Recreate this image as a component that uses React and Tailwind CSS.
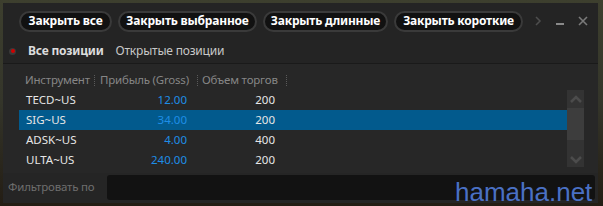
import React from "react";

const rows = [
  { sym: "TECD~US", profit: "12.00", vol: "200" },
  { sym: "SIG~US", profit: "34.00", vol: "200", selected: true },
  { sym: "ADSK~US", profit: "4.00", vol: "400" },
  { sym: "ULTA~US", profit: "240.00", vol: "200" },
];

const buttons = [
  { label: "Закрыть все", w: "w-[93px]" },
  { label: "Закрыть выбранное", w: "w-[139px]" },
  { label: "Закрыть длинные", w: "w-[125px]" },
  { label: "Закрыть короткие", w: "w-[129px]" },
];

function Sep() {
  return <span className="mx-[3px] h-[11px] w-0 shrink-0 border-l border-dotted border-[#5a5a5a]" />;
}

function Chevron({ down }) {
  return (
    <svg width="12" height="8" viewBox="0 0 12 8" className={down ? "rotate-180" : ""}>
      <path d="M1 7 L6 2 L11 7" fill="none" stroke="#4c4c4c" strokeWidth="2.5" />
    </svg>
  );
}

export default function App() {
  return (
    <div
      className="relative w-[603px] h-[206px] p-[3px] whitespace-nowrap bg-gradient-to-b from-[#3d3f2e] via-[#34352a] to-[#231d14]"
      style={{ fontFamily: '"Noto Sans", "Segoe UI", sans-serif' }}
    >
      <div className="flex h-[200px] w-[595px] flex-col bg-[#242424]">
        {/* toolbar */}
        <div className="flex h-[36px] items-center pl-[16px] pr-[10px]">
          <div className="flex gap-[6px]">
            {buttons.map((b) => (
              <button
                key={b.label}
                className={`${b.w} h-[21px] rounded-full border-2 border-[#3a3a3a] bg-[#111111] text-[12px] font-bold leading-none tracking-[-0.2px] text-white`}
              >
                {b.label}
              </button>
            ))}
          </div>
          <div className="ml-auto flex items-center gap-[14px]">
            <svg width="8" height="10" viewBox="0 0 8 10">
              <path d="M2 1 L6 5 L2 9" fill="none" stroke="#4e4e4e" strokeWidth="1.5" />
            </svg>
            <span className="mt-[6px] block h-[2px] w-[8px] bg-[#8a8a8a]" />
            <svg width="10" height="10" viewBox="0 0 10 10">
              <path d="M1 1 L9 9 M9 1 L1 9" stroke="#7a7a7a" strokeWidth="1.6" />
            </svg>
          </div>
        </div>

        {/* tabs */}
        <div className="flex h-[25px] items-center border-b border-[#1a1a1a] pl-[6px]">
          <span className="mr-[12px] flex h-[7px] w-[7px] items-center justify-center rounded-full bg-[#3a3a3a]">
            <span className="h-[4px] w-[4px] rounded-full bg-[#d00000]" />
          </span>
          <span className="text-[12px] font-bold tracking-[-0.2px] text-[#dcdcdc]">Все позиции</span>
          <span className="ml-[12px] text-[12px] tracking-[-0.2px] text-[#c8c8c8]">Открытые позиции</span>
        </div>

        {/* table */}
        <div className="flex flex-1 flex-col bg-[#272727] pl-[16px] pr-[14px]">
          <div className="mt-[6px] flex h-[20px] items-center text-[11.5px] tracking-[-0.2px] text-[#868686]">
            <span className="w-[72px] shrink-0 pl-[6px]">Инструмент</span>
            <Sep />
            <span className="w-[96px] shrink-0 pl-[2px]">Прибыль (Gross)</span>
            <Sep />
            <span className="w-[82px] shrink-0 pl-[1px]">Объем торгов</span>
            <Sep />
          </div>
          <div className="flex">
            <div className="flex flex-1 flex-col">
              {rows.map((r) => (
                <div
                  key={r.sym}
                  className={`flex h-[20px] items-center text-[11.5px] ${r.selected ? "bg-[#025a8d]" : ""}`}
                >
                  <span className="w-[75px] shrink-0 pl-[7px] text-[#e6e6e6]">{r.sym}</span>
                  <span className="w-[93px] shrink-0 text-right text-[#1e8ee6]">{r.profit}</span>
                  <span className="w-[88px] shrink-0 text-right text-[#e6e6e6]">{r.vol}</span>
                </div>
              ))}
            </div>
            <div className="flex h-[77px] w-[17px] flex-col bg-[#333333]">
              <div className="flex h-[18px] items-center justify-center">
                <Chevron />
              </div>
              <div className="h-[32px] bg-[#3d3d3d]" />
              <div className="mt-auto flex h-[14px] items-center justify-center">
                <Chevron down />
              </div>
            </div>
          </div>
        </div>

        {/* filter */}
        <div className="flex h-[30px] items-center bg-[#252525] pb-[2px] pl-[5px] pr-[3px]">
          <span className="w-[99px] shrink-0 text-[11.5px] tracking-[-0.2px] text-[#6e6e6e]">Фильтровать по</span>
          <div className="h-[25px] flex-1 rounded-[3px] bg-[#121212]" />
        </div>
      </div>

      <span
        className="absolute left-[455px] top-[182px] text-[26px] leading-[20px] text-[#4a70c4]"
        style={{ fontFamily: '"Liberation Sans", sans-serif' }}
      >
        hamaha.net
      </span>
    </div>
  );
}
